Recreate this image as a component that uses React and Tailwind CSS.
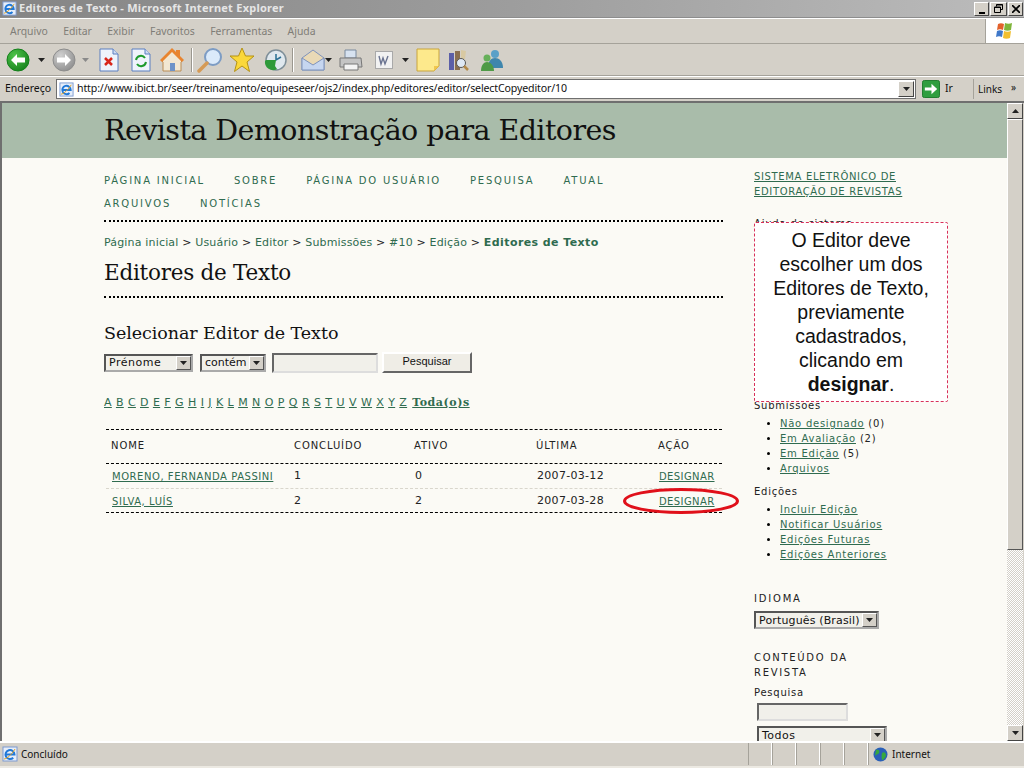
import React from "react";

const uiFont = "[font-family:'Noto_Sans','Open_Sans',sans-serif]";

function Caret({ className = "" }) {
  return (
    <svg width="7" height="4" viewBox="0 0 7 4" className={className}>
      <path d="M0 0h7L3.500 4z" fill="#222" />
    </svg>
  );
}

function Arrow({ dir, on }) {
  const a = on ? "#4fc34a" : "#d0d0d0";
  const b = on ? "#14801b" : "#8c8c8c";
  const id = dir + "g";
  return (
    <svg width="24" height="24" viewBox="0 0 24 24">
      <defs>
        <radialGradient id={id} cx="35%" cy="30%" r="80%">
          <stop offset="0" stopColor={a} />
          <stop offset="1" stopColor={b} />
        </radialGradient>
      </defs>
      <circle cx="12" cy="12" r="11" fill={`url(#${id})`} stroke={b} />
      <path d={dir === "l" ? "M5 12l6-6v3.500h8v5h-8V18z" : "M19 12l-6-6v3.500H5v5h8V18z"} fill="#fff" />
    </svg>
  );
}

function Sep() {
  return <div className="w-[2px] h-[24px] bg-[#9a978f] border-r border-white" />;
}

function PageIcon({ children }) {
  return (
    <svg width="22" height="24" viewBox="0 0 22 24">
      <path d="M2 1h13l5 5v17H2z" fill="#eef3fb" stroke="#5a7fc0" />
      <path d="M15 1v5h5" fill="#cfdcf2" stroke="#5a7fc0" />
      {children}
    </svg>
  );
}

function Toolbar() {
  return (
    <div className="h-[32px] bg-[#d4d0c8] border-b border-[#a5a29a] flex items-center pl-[6px]">
      <Arrow dir="l" on />
      <Caret className="ml-[8px]" />
      <div className="ml-[7px]"><Arrow dir="r" /></div>
      <svg width="7" height="4" viewBox="0 0 7 4" className="ml-[6px]"><path d="M0 0h7L3.500 4z" fill="#8a8a8a" /></svg>
      <div className="ml-[9px]">
        <PageIcon><path d="M7 10l7 7M14 10l-7 7" stroke="#d8261c" strokeWidth="2.500" /></PageIcon>
      </div>
      <div className="ml-[10px]">
        <PageIcon>
          <path d="M6 12a5 5 0 0 1 9-2" fill="none" stroke="#1d9a2c" strokeWidth="2" />
          <path d="M16 14a5 5 0 0 1-9 2" fill="none" stroke="#1d9a2c" strokeWidth="2" />
        </PageIcon>
      </div>
      <svg width="26" height="26" viewBox="0 0 26 26" className="ml-[7px]">
        <path d="M2 13L13 2l11 11-2 2v9H4v-9z" fill="#f2e7d2" stroke="#b98c55" />
        <path d="M1 13L13 1l4 4V3h4v6l4 4-2 2L13 5 3 15z" fill="#e8842f" />
        <rect x="11" y="16" width="5" height="8" fill="#6e93c8" />
      </svg>
      <div className="ml-[6px]"><Sep /></div>
      <svg width="26" height="26" viewBox="0 0 26 26" className="ml-[4px]">
        <circle cx="16" cy="10" r="8" fill="#dbeafa" stroke="#7d9cc4" strokeWidth="2" />
        <path d="M10 16l-8 8" stroke="#d59a55" strokeWidth="3.500" strokeLinecap="round" />
      </svg>
      <svg width="26" height="26" viewBox="0 0 26 26" className="ml-[6px]">
        <path d="M13 1l3.500 8H25l-7 6 2.500 9.500L13 19l-7.500 5.500L8 15 1 9h8.500z" fill="#fbd83a" stroke="#b49216" />
      </svg>
      <svg width="24" height="24" viewBox="0 0 24 24" className="ml-[8px]">
        <circle cx="13" cy="12" r="10" fill="#dfe8ee" stroke="#7e8f99" strokeWidth="1.500" />
        <path d="M13 6v6l5-3" fill="none" stroke="#2a6f93" strokeWidth="1.500" />
        <path d="M2 13a8 8 0 0 0 12 8l-2-3 1-6H3z" fill="#2e9a3a" />
      </svg>
      <div className="ml-[5px]"><Sep /></div>
      <svg width="24" height="22" viewBox="0 0 24 22" className="ml-[7px]">
        <path d="M1 9l11-8 11 8v12H1z" fill="#e9d9b6" stroke="#7f93bb" />
        <path d="M1 9l11 7 11-7v12H1z" fill="#c6d6f0" stroke="#7f93bb" />
      </svg>
      <Caret />
      <svg width="26" height="24" viewBox="0 0 26 24" className="ml-[6px]">
        <path d="M7 2h11v8H7z" fill="#d7e2f0" stroke="#7a8a9e" />
        <path d="M2 10h21l1 9H2z" fill="#c4c4c4" stroke="#777" />
        <path d="M6 16h14v6H6z" fill="#f4f4f4" stroke="#777" />
      </svg>
      <svg width="18" height="18" viewBox="0 0 18 18" className="ml-[11px]">
        <rect x=".5" y=".5" width="17" height="17" fill="#f2f2f2" stroke="#a9a9a9" />
        <path d="M4 5l2 8 2-6 2 6 3-8" fill="none" stroke="#6a7390" strokeWidth="1.400" />
      </svg>
      <Caret className="ml-[9px]" />
      <svg width="24" height="24" viewBox="0 0 24 24" className="ml-[7px]">
        <path d="M1 1h22v17l-5 5H1z" fill="#fde98c" stroke="#c9a53d" />
        <path d="M23 18h-5v5z" fill="#f0c64f" />
      </svg>
      <svg width="24" height="24" viewBox="0 0 24 24" className="ml-[7px]">
        <rect x="2" y="5" width="5" height="17" fill="#5b5fa8" />
        <rect x="8" y="3" width="5" height="19" fill="#8a6f4f" />
        <path d="M14 2l5 1-1 8h-4z" fill="#d8c9a2" />
        <circle cx="14" cy="15" r="4.500" fill="#dfe9f5" stroke="#555" />
        <path d="M17 18l4 4" stroke="#b38a4a" strokeWidth="2.500" />
      </svg>
      <svg width="26" height="24" viewBox="0 0 26 24" className="ml-[8px]">
        <circle cx="16" cy="6" r="4" fill="#5aa0c8" />
        <path d="M9 20c0-7 3-10 7-10s8 3 8 10z" fill="#3f86ad" />
        <circle cx="8" cy="10" r="3.500" fill="#66b05a" />
        <path d="M2 23c0-6 3-9 6-9s7 3 7 9z" fill="#4f9a47" />
      </svg>
    </div>
  );
}

function IeIcon({ size = 16 }) {
  return (
    <svg width={size} height={size} viewBox="0 0 16 16">
      <rect x="1" y="1" width="14" height="14" fill="#e6eefa" stroke="#7c9ad0" />
      <path d="M3.500 8.500h9a4.500 4.500 0 1 0-1.300 3.200" fill="none" stroke="#1f78d8" strokeWidth="2" />
      <path d="M2 13c3 0 9-6 11-10" fill="none" stroke="#e0a020" />
    </svg>
  );
}

function Select({ label, w, track = "tracking-[0.5px]", labelCls = "" }) {
  return (
    <div className={`${w} h-[18px] bg-[#f1f0ea] border-2 border-t-[#555] border-l-[#555] border-b-[#aaa] border-r-[#aaa] flex items-center justify-between text-[11px] text-[#111] ${track}`}>
      <span className={`pl-[3px] whitespace-nowrap ${labelCls}`}>{label}</span>
      <span className="w-[15px] h-[14px] bg-[#d4d0c8] border border-t-white border-l-white border-b-[#555] border-r-[#555] flex items-center justify-center">
        <Caret />
      </span>
    </div>
  );
}

const Link = ({ children, className = "" }) => (
  <a className={`text-[#2f6b4f] underline ${className}`}>{children}</a>
);

function SideList({ items }) {
  return (
    <ul className="mt-[3px] ml-[26px] list-disc leading-[15px] marker:text-black">
      {items.map(([t, n]) => (
        <li key={t}>
          <Link>{t}</Link>
          {n ? ` ${n}` : ""}
        </li>
      ))}
    </ul>
  );
}

const letters = "ABCDEFGHIJKLMNOPQRSTUVWXYZ".split("");
const cols = "grid grid-cols-[183px_120px_122px_122px_69px] items-center";

function Row({ name, a, b, date, border, h }) {
  return (
    <div className={`${cols} ${border} ${h} pt-[1px] text-[10px] tracking-[0.55px]`}>
      <span className="pl-[6px] whitespace-nowrap"><Link>{name}</Link></span>
      <span className="pl-[5px] text-[11px]">{a}</span>
      <span className="pl-[6px] text-[11px]">{b}</span>
      <span className="pl-[6px] text-[11px] tracking-[0.3px]">{date}</span>
      <span className="pl-[6px] tracking-[0.4px]"><Link>DESIGNAR</Link></span>
    </div>
  );
}

export default function App() {
  return (
    <div className={`w-[1024px] h-[768px] overflow-hidden flex flex-col bg-[#d4d0c8] ${uiFont}`}>
      <div className="h-[18px] shrink-0 bg-gradient-to-r from-[#858585] via-[#9d9d9d] to-[#bcbcbc] flex items-center pl-[2px] border-b border-[#8d8d8d]">
        <IeIcon size={15} />
        <span className="ml-[2px] text-[11px] font-bold text-[#e6e6e6] tracking-[0.25px] whitespace-nowrap">Editores de Texto - Microsoft Internet Explorer</span>
        <div className="ml-auto mr-[1px] flex gap-[1px]">
          <span className="w-[15px] h-[14px] bg-[#d4d0c8] border border-t-white border-l-white border-b-[#444] border-r-[#444] flex items-end justify-center pb-[1px]"><span className="w-[6px] h-[2px] bg-black" /></span>
          <span className="w-[17px] h-[14px] bg-[#d4d0c8] border border-t-white border-l-white border-b-[#444] border-r-[#444] flex items-center justify-center">
            <svg width="9" height="9" viewBox="0 0 9 9"><path d="M2.500 2.500V.5h6v5h-2M.5 3h6v5.500h-6z" fill="none" stroke="#000" /><path d="M2.500 1h6M.5 3.500h6" stroke="#000" /></svg>
          </span>
          <span className="w-[15px] h-[14px] bg-[#d4d0c8] border border-t-white border-l-white border-b-[#444] border-r-[#444] flex items-center justify-center">
            <svg width="8" height="8" viewBox="0 0 8 8"><path d="M0 0l8 8M8 0L0 8" stroke="#000" strokeWidth="1.600" /></svg>
          </span>
        </div>
      </div>

      <div className="h-[26px] shrink-0 bg-[#d4d0c8] border-t border-white border-b border-b-[#a5a29a] flex items-center pl-[10px] text-[10.400px] text-[#7f7d77] relative">
        <div className="flex gap-[15.400px] pt-[1px]">
          <span>Arquivo</span><span>Editar</span><span>Exibir</span><span>Favoritos</span><span>Ferramentas</span><span>Ajuda</span>
        </div>
        <div className="ml-auto w-[39px] h-full bg-white border-l border-[#a5a29a] flex items-center justify-center">
          <svg width="20" height="18" viewBox="0 0 20 18">
            <path d="M3 2c2-1 4-1 6 0l-1 6c-2-1-4-1-6 0z" fill="#e2612c" />
            <path d="M10 1c2 1 5 1 7 0l-1 7c-2 1-5 1-7 0z" fill="#7fb53a" />
            <path d="M2 9c2-1 4-1 6 0l-1 6c-2-1-4-1-6 0z" fill="#3f78c9" />
            <path d="M9 9c2 1 5 1 7 0l-1 7c-2 1-5 1-7 0z" fill="#f2bf2e" />
          </svg>
        </div>
      </div>

      <Toolbar />

      <div className="h-[25px] shrink-0 bg-[#d4d0c8] border-t border-white flex items-center text-[10.500px] text-[#111]">
        <span className="pl-[5px] w-[56px]">Endereço</span>
        <div className="w-[860px] h-[20px] bg-white border border-[#6f6f6f] flex items-center">
          <span className="ml-[2px]"><IeIcon size={15} /></span>
          <span className="ml-[3px] text-[10.600px] tracking-[-0.14px] whitespace-nowrap">http://www.ibict.br/seer/treinamento/equipeseer/ojs2/index.php/editores/editor/selectCopyeditor/10</span>
          <span className="ml-auto w-[16px] h-[16px] mr-[1px] bg-[#d4d0c8] border border-t-white border-l-white border-b-[#444] border-r-[#444] flex items-center justify-center"><Caret /></span>
        </div>
        <svg width="18" height="18" viewBox="0 0 19 19" className="ml-[6px]">
          <rect x=".5" y=".5" width="18" height="18" rx="2" fill="#2f9e3f" stroke="#1c7a2a" />
          <path d="M3 8h7V4l6 5.500-6 5.500v-4H3z" fill="#fff" />
        </svg>
        <span className="ml-[5px]">Ir</span>
        <span className="ml-[20px] w-[1px] h-[20px] bg-[#a5a29a]" />
        <span className="ml-[4px] text-[10px]">Links</span>
        <span className="ml-[9px] text-[10px] leading-none -mt-[4px]">»</span>
      </div>

      <div className="flex-1 min-h-0 flex border-t-2 border-l-2 border-[#6f6f6f] relative">
        <div className="flex-1 min-w-0 overflow-hidden bg-[#fbfaf5] font-['DejaVu_Sans',sans-serif] text-[11px] text-[#222]">
          <div className="h-[55px] bg-[#a9bcaa] pl-[102px] pt-[2px] flex items-center">
            <h1 className="font-['DejaVu_Serif',serif] text-[28.500px] font-normal text-[#111] tracking-[-0.55px] leading-none whitespace-nowrap">Revista Demonstração para Editores</h1>
          </div>
          <div className="flex pl-[102px]">
            <div className="w-[619px]">
              <div className="pt-[11px] pb-[5px] border-b-2 border-dotted border-black text-[10px] tracking-[1.78px] leading-[23px] text-[#2f6b4f]">
                <div className="flex gap-[29px]"><span>PÁGINA INICIAL</span><span>SOBRE</span><span>PÁGINA DO USUÁRIO</span><span>PESQUISA</span><span>ATUAL</span></div>
                <div className="flex gap-[29px]"><span>ARQUIVOS</span><span>NOTÍCIAS</span></div>
              </div>
              <div className="mt-[13px] leading-[15px] tracking-[0.17px] text-[#2f6b4f] whitespace-nowrap">
                Página inicial <span className="text-[#222]">&gt;</span> Usuário <span className="text-[#222]">&gt;</span> Editor <span className="text-[#222]">&gt;</span> Submissões <span className="text-[#222]">&gt;</span> #10 <span className="text-[#222]">&gt;</span> Edição <span className="text-[#222]">&gt;</span> <strong className="tracking-[0.42px]">Editores de Texto</strong>
              </div>
              <h2 className="mt-[8px] pb-[8px] border-b-2 border-dotted border-black font-['DejaVu_Serif',serif] text-[21.500px] font-normal tracking-[-0.25px] leading-[30px] text-[#111]">Editores de Texto</h2>
              <h3 className="mt-[21px] font-['DejaVu_Serif',serif] text-[17.500px] font-normal tracking-[-0.07px] leading-[28px] text-[#111]">Selecionar Editor de Texto</h3>
              <div className="mt-[5px] flex items-center gap-[6px]">
                <Select label="Prénome" w="w-[89px] mr-[1px]" labelCls="pt-[2px]" />
                <Select label="contém" w="w-[66px]" track="tracking-[0px]" labelCls="pt-[2px]" />
                <div className="w-[106px] h-[20px] bg-[#f1f0ea] border-2 border-t-[#666] border-l-[#666] border-b-[#ddd] border-r-[#ddd]" />
                <div className="ml-[-2px] w-[90px] h-[21px] pb-[2px] bg-[#efede6] border-2 border-t-white border-l-white border-b-[#666] border-r-[#666] flex items-center justify-center font-['Liberation_Sans',sans-serif] text-[11px] text-[#111]">Pesquisar</div>
              </div>
              <div className="mt-[22px] leading-[16px] flex items-center gap-[4.120px] text-[11px] text-[#2f6b4f] tracking-[0.3px]">
                {letters.map((l) => <Link key={l}>{l}</Link>)}
                <Link className="font-bold font-['DejaVu_Serif',serif] tracking-[0.55px] ml-[1px]">Toda(o)s</Link>
              </div>
              <div className="mt-[18px] ml-[2px] w-[616px]">
                <div className={`${cols} h-[35px] pb-[2px] border-y border-dashed border-black text-[10px] tracking-[0.9px] text-[#222]`}>
                  <span className="pl-[5px]">NOME</span>
                  <span className="pl-[5px]">CONCLUÍDO</span>
                  <span className="pl-[5px]">ATIVO</span>
                  <span className="pl-[5px]">ÚLTIMA</span>
                  <span className="pl-[5px]">AÇÃO</span>
                </div>
                <Row h="h-[25px]" name="MORENO, FERNANDA PASSINI" a="1" b="0" date="2007-03-12" border="border-b border-dashed border-[#d9d6cc]" />
                <Row h="h-[24px]" name="SILVA, LUÍS" a="2" b="2" date="2007-03-28" border="border-b border-dashed border-black" />
              </div>
            </div>
            <div className="ml-[31px] w-[200px] pt-[11px] text-[10px] leading-[15px] tracking-[0.75px]">
              <div className="tracking-[0.65px]"><Link>SISTEMA ELETRÔNICO DE<br />EDITORAÇÃO DE REVISTAS</Link></div>
              <div className="mt-[17px] tracking-[0.8px]">Ajuda do sistema</div>
              <div className="h-[167px]" />
              <div>Submissões</div>
              <SideList items={[["Não designado", "(0)"], ["Em Avaliação", "(2)"], ["Em Edição", "(5)"], ["Arquivos"]]} />
              <div className="mt-[8px]">Edições</div>
              <SideList items={[["Incluir Edição"], ["Notificar Usuários"], ["Edições Futuras"], ["Edições Anteriores"]]} />
              <div className="mt-[29px] tracking-[1.8px]">IDIOMA</div>
              <div className="mt-[5px]"><Select label="Português (Brasil)" w="w-[125px]" track="tracking-[0.15px]" /></div>
              <div className="mt-[21px] tracking-[1.7px]">CONTEÚDO DA<br />REVISTA</div>
              <div className="mt-[5px]">Pesquisa</div>
              <div className="mt-[3px] ml-[3px] w-[91px] h-[18px] bg-[#f1f0ea] border-2 border-t-[#666] border-l-[#666] border-b-[#ddd] border-r-[#ddd]" />
              <div className="mt-[5px] ml-[3px]"><Select label="Todos" w="w-[130px]" /></div>
            </div>
          </div>
        </div>

        <div className="w-[16px] mr-[1px] shrink-0 flex flex-col bg-[repeating-conic-gradient(#d4d0c8_0_25%,#ffffff_0_50%)] bg-[length:2px_2px]">
          <div className="h-[16px] bg-[#d4d0c8] border border-t-white border-l-white border-b-[#444] border-r-[#444] flex items-center justify-center"><Caret className="rotate-180" /></div>
          <div className="h-[431px] bg-[#d4d0c8] border border-t-white border-l-white border-b-[#555] border-r-[#555]" />
          <div className="flex-1" />
          <div className="h-[16px] bg-[#d4d0c8] border border-t-white border-l-white border-b-[#444] border-r-[#444] flex items-center justify-center"><Caret /></div>
        </div>

        <div className="absolute left-[752px] top-[119px] w-[194px] h-[180px] bg-white border border-dashed border-[#d8305a] rounded-[2px] flex items-center justify-center text-center font-['Liberation_Sans',sans-serif] text-[19.500px] leading-[24px] text-[#111]">
          <p>O Editor deve<br />escolher um dos<br />Editores de Texto,<br />previamente<br />cadastrados,<br />clicando em<br /><strong>designar</strong>.</p>
        </div>
        <svg width="118" height="28" viewBox="0 0 118 28" className="absolute left-[621px] top-[384px]">
          <ellipse cx="58" cy="14" rx="56.500" ry="11.500" fill="none" stroke="#e0101a" strokeWidth="3" />
        </svg>
      </div>

      <div className="h-[27px] shrink-0 bg-[#d4d0c8] border-t-2 border-white flex items-center pb-[1px] text-[10px] text-[#111] border-b-2 border-b-[#ece9e2]">
        <span className="ml-[2px]"><IeIcon size={16} /></span>
        <span className="ml-[3px]">Concluído</span>
        <div className="ml-auto flex items-center h-full">
          {[0, 1, 2, 3, 4].map((i) => (
            <span key={i} className="w-[24px] h-full border-l border-[#a5a29a] border-r border-r-white" />
          ))}
          <span className="w-[156px] h-full border-l border-[#a5a29a] flex items-center pl-[4px]">
            <svg width="15" height="15" viewBox="0 0 15 15">
              <circle cx="7.500" cy="7.500" r="7" fill="#2a5fb8" />
              <path d="M3 3c3-1 4 1 3 3s-3 1-4 3M9 6c2-2 4 0 4 2s-2 4-3 5-2-3-1-7z" fill="#35a83f" />
            </svg>
            <span className="ml-[4px]">Internet</span>
          </span>
        </div>
      </div>
    </div>
  );
}
